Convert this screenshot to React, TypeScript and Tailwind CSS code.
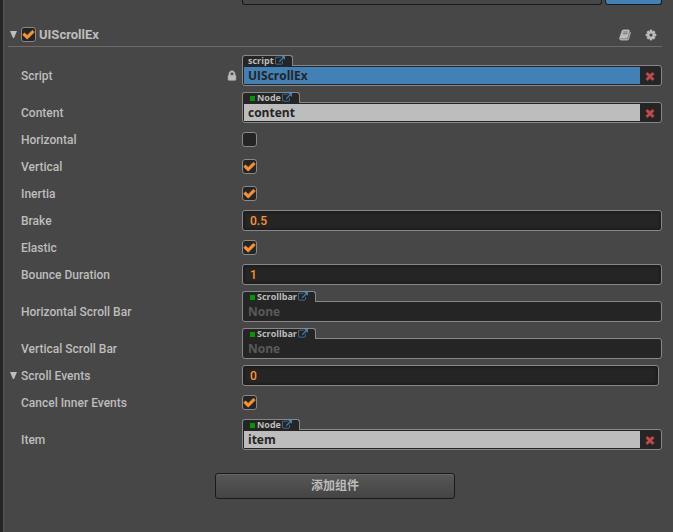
import React, { useState } from 'react';

const ICONS = {
  check: 'M1671 566q0 40-28 68l-724 724-136 136q-28 28-68 28t-68-28l-136-136-362-362q-28-28-28-68t28-68l136-136q28-28 68-28t68 28l294 295 656-657q28-28 68-28t68 28l136 136q28 28 28 68z',
  times: 'M1490 1322q0 40-28 68l-136 136q-28 28-68 28t-68-28l-294-294-294 294q-28 28-68 28t-68-28l-136-136q-28-28-28-68t28-68l294-294-294-294q-28-28-28-68t28-68l136-136q28-28 68-28t68 28l294 294 294-294q28-28 68-28t68 28l136 136q28 28 28 68t-28 68l-294 294 294 294q28 28 28 68z',
  lock: 'M640 768h512v-192q0-106-75-181t-181-75-181 75-75 181v192zm832 96v576q0 40-28 68t-68 28h-960q-40 0-68-28t-28-68v-576q0-40 28-68t68-28h32v-192q0-184 132-316t316-132 316 132 132 316v192h32q40 0 68 28t28 68z',
  link: 'M1408 928v320q0 119-84.5 203.5t-203.5 84.5h-832q-119 0-203.5-84.5t-84.5-203.5v-832q0-119 84.5-203.5t203.5-84.5h704q14 0 23 9t9 23v64q0 14-9 23t-23 9h-704q-66 0-113 47t-47 113v832q0 66 47 113t113 47h832q66 0 113-47t47-113v-320q0-14 9-23t23-9h64q14 0 23 9t9 23zm384-864v512q0 26-19 45t-45 19-45-19l-176-176-652 652q-10 10-23 10t-23-10l-114-114q-10-10-10-23t10-23l652-652-176-176q-19-19-19-45t19-45 45-19h512q26 0 45 19t19 45z',
  cog: 'M1152 896q0-106-75-181t-181-75-181 75-75 181 75 181 181 75 181-75 75-181zm512-109v222q0 12-8 23t-20 13l-185 28q-19 54-39 91 35 50 107 138 10 12 10 25t-9 23q-27 37-99 108t-94 71q-12 0-26-9l-138-108q-44 23-91 38-16 136-29 186-7 28-36 28h-222q-14 0-24.5-8.5t-11.5-21.5l-28-184q-49-16-90-37l-141 107q-10 9-25 9-14 0-25-11-126-114-165-168-7-10-7-23 0-12 8-23 15-21 51-66.5t54-70.5q-27-50-41-99l-183-27q-13-2-21-12.5t-8-23.5v-222q0-12 8-23t19-13l186-28q14-46 39-92-40-57-107-138-10-12-10-24 0-10 9-23 26-36 98.5-107.5t94.5-71.5q13 0 26 10l138 107q44-23 91-38 16-136 29-186 7-28 36-28h222q14 0 24.5 8.5t11.5 21.5l28 184q49 16 90 37l142-107q9-9 24-9 13 0 25 10 129 119 165 170 7 8 7 22 0 12-8 23-15 21-51 66.5t-54 70.5q26 50 41 98l183 28q13 2 21 12.5t8 23.5z',
  book: 'M1703 478q40 57 18 129l-275 906q-19 64-76.5 107.5t-122.5 43.5h-923q-77 0-148.5-53.5t-99.5-131.5q-24-67-2-127 0-4 3-27t4-37q1-8-3-21.5t-3-19.5q2-11 8-21t16.5-23.5 16.5-23.5q23-38 45-91.5t30-91.5q3-10 .5-30t-.5-28q3-11 17-28t17-23q21-36 42-92t25-90q1-9-2.5-32t.5-28q4-13 22-30.5t22-22.5q19-26 42.5-84.5t27.5-96.5q1-8-3-25.5t-2-26.5q2-8 9-18t18-23 17-21q8-12 16.5-30.5t15-35 16-36 19.5-32 26.5-23.5 36-11.5 47.5 5.5l-1 3q38-9 51-9h761q74 0 114 56t18 130l-274 906q-36 119-71.5 153.5t-128.5 34.5h-869q-27 0-38 15-11 16-1 43 24 70 144 70h923q29 0 56-15.5t35-41.5l300-987q7-22 5-57 38 15 59 43zm-1064 2q-4 13 2 22.5t20 9.5h608q13 0 25.5-9.5t16.5-22.5l21-64q4-13-2-22.5t-20-9.5h-608q-13 0-25.5 9.5t-16.5 22.5zm-83 256q-4 13 2 22.5t20 9.5h608q13 0 25.5-9.5t16.5-22.5l21-64q4-13-2-22.5t-20-9.5h-608q-13 0-25.5 9.5t-16.5 22.5z',
};

const Icon: React.FC<{ name: keyof typeof ICONS; className?: string }> = ({ name, className }) => (
  <svg viewBox="0 0 1792 1792" fill="currentColor" stroke="currentColor" className={className} aria-hidden="true">
    <path d={ICONS[name]} />
  </svg>
);

const Fold: React.FC<{ title: string }> = ({ title }) => (
  <button type="button" aria-label={title} className="flex h-[21px] w-[13px] shrink-0 items-center pl-[2px] text-[#bdbdbd]">
    <svg viewBox="0 0 7 7" fill="currentColor" className="size-[7px]" aria-hidden="true">
      <path d="M0 0h7L4 7H3z" />
    </svg>
  </button>
);

const CheckBox: React.FC<{ id: string; initial?: boolean; label?: string }> = ({ id, initial = false, label }) => {
  const [checked, setChecked] = useState(initial);
  return (
    <span className="grid size-[15px] shrink-0 place-items-center">
      <input
        id={id}
        type="checkbox"
        aria-label={label}
        checked={checked}
        onChange={(e) => setChecked(e.target.checked)}
        className="size-[15px] appearance-none rounded-[3px] border border-[#888] bg-[#252525] [grid-area:1/1]"
      />
      {checked && <Icon name="check" className="pointer-events-none size-[13px] stroke-[90] text-[#fd942b] [grid-area:1/1]" />}
    </span>
  );
};

interface RowProps {
  id: string;
  label: string;
  fold?: boolean;
  locked?: boolean;
  children: React.ReactNode;
}

const Row: React.FC<RowProps> = ({ id, label, fold, locked, children }) => (
  <div className="flex items-end">
    <div className="flex h-[21px] w-[234px] shrink-0 items-center">
      {fold ? <Fold title={`Toggle ${label}`} /> : <span className="w-[13px] shrink-0" />}
      <label htmlFor={id} className="flex-1 whitespace-nowrap">{label}</label>
      {locked && <Icon name="lock" className="mr-1 size-3 stroke-[80] text-[#bdbdbd]" />}
    </div>
    {children}
  </div>
);

const NumberField: React.FC<{ id: string; initial: string; inset?: boolean }> = ({ id, initial, inset }) => {
  const [value, setValue] = useState(initial);
  return (
    <input
      id={id}
      type="text"
      value={value}
      onChange={(e) => setValue(e.target.value)}
      className={`h-[21px] min-w-0 flex-1 rounded-[3px] border border-[#888] bg-[#252525] px-[7px] text-[#fd942b] shadow-[inset_0_0_3px_1px_#1a1a1a] outline-none ${inset ? 'mr-[3px]' : ''}`}
    />
  );
};

interface RefFieldProps {
  id: string;
  type: string;
  value?: string;
  script?: boolean;
}

// Object slot with the type tab on top of the box
const RefField: React.FC<RefFieldProps> = ({ id, type, value, script }) => (
  <div className="flex min-w-0 flex-1 flex-col items-start">
    <div className="z-10 -mb-px flex h-[11px] items-center rounded-t-[3px] border border-b-0 border-[#888] bg-[#252525] pr-[7px] pl-[5px] font-['Open_Sans',sans-serif] text-[9px] leading-[10px] font-bold text-[#bdbdbd]">
      {!script && <span className="mr-[2px] ml-[2px] size-[5px] bg-[#090]" />}
      <span>{type}</span>
      <a href="#" aria-label={`Open ${type}`} className="ml-px text-[#4281b6]">
        <Icon name="link" className="size-[10px]" />
      </a>
    </div>
    <div className="flex h-[21px] w-full rounded-[3px] rounded-tl-none border border-[#888] bg-[#252525] p-px">
      <input
        id={id}
        type="text"
        readOnly
        value={value ?? ''}
        placeholder="None"
        className={`min-w-0 flex-1 px-1 font-['Open_Sans',sans-serif] font-bold text-[#252525] outline-none placeholder:text-[#5a5a5a] ${value ? (script ? 'bg-[#4281b6]' : 'bg-[#bdbdbd]') : ''}`}
      />
      {value && (
        <button type="button" aria-label={`Clear ${value}`} className="flex w-5 items-center justify-center text-[#c14a4a]">
          <Icon name="times" className="size-3 stroke-[90]" />
        </button>
      )}
    </div>
  </div>
);

export default function App() {
  return (
    <main className="min-h-screen overflow-hidden border-l-[3px] border-[#252525] bg-[#474747] font-['Roboto','Noto_Sans_CJK_SC',sans-serif] text-[12px] leading-4 font-medium text-[#bdbdbd]">
      <div className="min-h-screen border-l border-[#555] pr-[11px] pl-1">
        <div className="flex h-[5px] gap-[3px] pl-[234px]">
          <div className="flex-1 rounded-b-[3px] border border-t-0 border-[#1a1a1a]" />
          <div className="w-[57px] rounded-b-[3px] border border-t-0 border-[#1a1a1a] bg-[#4281b6]" />
        </div>

        <section>
          <header className="mt-[18px] flex h-6 items-center border-b border-[#6c6c6c]">
            <Fold title="Toggle UIScrollEx" />
            <CheckBox id="enabled" initial label="Enable UIScrollEx" />
            <h2 className="ml-[3px] flex-1 text-[13px] font-bold">UIScrollEx</h2>
            <button type="button" aria-label="Help" className="mr-[14px]">
              <Icon name="book" className="size-3 stroke-[60]" />
            </button>
            <button type="button" aria-label="Settings" className="mr-[5px]">
              <Icon name="cog" className="size-3 stroke-[60]" />
            </button>
          </header>

          <div className="mt-2 flex flex-col gap-[6px]">
            <Row id="script" label="Script" locked>
              <RefField id="script" type="script" value="UIScrollEx" script />
            </Row>
            <Row id="content" label="Content">
              <RefField id="content" type="Node" value="content" />
            </Row>
            <Row id="horizontal" label="Horizontal">
              <div className="flex h-[21px] items-center"><CheckBox id="horizontal" /></div>
            </Row>
            <Row id="vertical" label="Vertical">
              <div className="flex h-[21px] items-center"><CheckBox id="vertical" initial /></div>
            </Row>
            <Row id="inertia" label="Inertia">
              <div className="flex h-[21px] items-center"><CheckBox id="inertia" initial /></div>
            </Row>
            <Row id="brake" label="Brake">
              <NumberField id="brake" initial="0.5" />
            </Row>
            <Row id="elastic" label="Elastic">
              <div className="flex h-[21px] items-center"><CheckBox id="elastic" initial /></div>
            </Row>
            <Row id="bounce" label="Bounce Duration">
              <NumberField id="bounce" initial="1" />
            </Row>
            <Row id="hbar" label="Horizontal Scroll Bar">
              <RefField id="hbar" type="Scrollbar" />
            </Row>
            <Row id="vbar" label="Vertical Scroll Bar">
              <RefField id="vbar" type="Scrollbar" />
            </Row>
            <Row id="events" label="Scroll Events" fold>
              <NumberField id="events" initial="0" inset />
            </Row>
            <Row id="cancel" label="Cancel Inner Events">
              <div className="flex h-[21px] items-center"><CheckBox id="cancel" initial /></div>
            </Row>
            <Row id="item" label="Item">
              <RefField id="item" type="Node" value="item" />
            </Row>
          </div>
        </section>

        <button
          type="button"
          className="mx-auto mt-[23px] block h-[26px] w-60 rounded-[3px] border border-[#1a1a1a] bg-linear-to-b from-[#575757] to-[#444] font-bold shadow-[inset_0_1px_0_#666]"
        >
          添加组件
        </button>
      </div>
    </main>
  );
}
